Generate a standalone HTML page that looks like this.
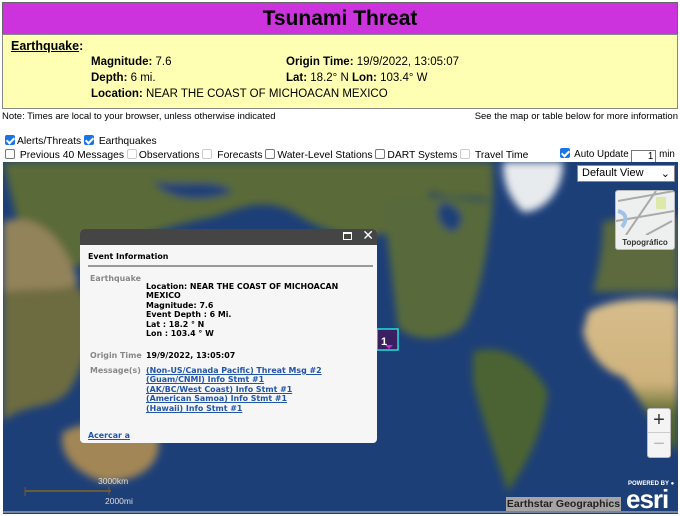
<!DOCTYPE html>
<html><head><meta charset="utf-8"><style>
*{margin:0;padding:0;box-sizing:border-box}
body{width:680px;height:516px;background:#fff;font-family:"Liberation Sans",sans-serif;position:relative;overflow:hidden;font-size:11px;color:#000}
.abs{position:absolute}
.title{left:2px;top:2px;width:676px;height:33px;background:#cc33dd;border:1px solid #666;text-align:center;font-weight:bold;font-size:21px;line-height:31px}
.eq{left:2px;top:34px;width:676px;height:75px;background:#ffffb4;border:1px solid #888}
.eq div{position:absolute;font-size:11.5px}
.cb{display:inline-block;width:10px;height:10px;border:1px solid #777;border-radius:2px;background:#fff;vertical-align:-1px;margin-right:2px}
.cb.on{background:#1a73e8;border-color:#1a73e8;position:relative}
.cb.on:after{content:"";position:absolute;left:2px;top:0px;width:3px;height:6px;border:solid #fff;border-width:0 2px 2px 0;transform:rotate(45deg)}
.cb.dis{border-color:#ccc}
.pop{left:80px;top:229px;width:297px;height:214px;background:#f6f6f6;border-radius:4px;overflow:hidden;font-family:"DejaVu Sans",sans-serif;font-size:7.9px;font-weight:bold}
.pop .hd{height:16px;background:#454545}
.lbl{color:#888}
a{color:#2255aa;text-decoration:underline}
</style></head><body>
<div class="abs title">Tsunami Threat</div>
<div class="abs eq">
<div style="left:8px;top:4px;font-weight:bold;font-size:12.5px"><u>Earthquake</u>:</div>
<div style="left:88px;top:21px"><b>Magnitude:</b> 7.6</div>
<div style="left:283px;top:21px"><b>Origin Time:</b> 19/9/2022, 13:05:07</div>
<div style="left:88px;top:37px"><b>Depth:</b> 6 mi.</div>
<div style="left:283px;top:37px"><b>Lat:</b> 18.2° N <b>Lon:</b> 103.4° W</div>
<div style="left:88px;top:53px"><b>Location:</b> NEAR THE COAST OF MICHOACAN MEXICO</div>
</div>
<div class="abs" style="left:2px;top:111px;font-size:9.5px">Note: Times are local to your browser, unless otherwise indicated</div>
<div class="abs" style="right:2px;top:111px;font-size:9.5px">See the map or table below for more information</div>
<div class="abs" style="left:5px;top:135px;font-size:10.3px"><span class="cb on"></span>Alerts/Threats <span class="cb on"></span> Earthquakes</div>
<div class="abs" style="left:5px;top:149px;font-size:10.3px;white-space:nowrap"><span class="cb"></span> Previous 40 Messages <span class="cb dis"></span>Observations <span class="cb dis"></span> Forecasts <span class="cb"></span>Water-Level Stations <span class="cb"></span>DART Systems <span class="cb dis"></span> Travel Time</div>
<div class="abs" style="left:560px;top:148px;font-size:9.8px;white-space:nowrap"><span class="cb on"></span> Auto Update <span style="display:inline-block;width:25px;height:13px;border:1px solid #777;text-align:right;padding-right:2px;vertical-align:-2px">1</span> min</div>

<svg class="abs" style="left:3px;top:162px" width="675" height="352" viewBox="0 0 675 352">
<defs><filter id="b"><feGaussianBlur stdDeviation="4"/></filter>
<linearGradient id="af" x1="0" y1="0" x2="0" y2="1"><stop offset="0" stop-color="#d7bd8c"/><stop offset="0.55" stop-color="#cfb27c"/><stop offset="0.75" stop-color="#5b6b2e"/><stop offset="1" stop-color="#48602a"/></linearGradient></defs>
<rect width="675" height="352" fill="#1d3f78"/>
<g filter="url(#b)">
<path d="M0 0H490V40C470 30 450 40 430 30 410 40 400 60 390 70 350 80 320 70 290 50 260 35 240 45 210 55 180 60 150 70 120 80 90 100 60 110 30 120 0 125Z" fill="#5a6a38"/>
<path d="M0 110C30 100 60 110 80 130 95 160 85 200 65 230 45 250 20 240 0 260Z" fill="#6d6c40"/>
<path d="M0 60C30 50 60 70 75 120 70 130 30 125 0 130Z" fill="#93835a"/>
<path d="M380 40C400 30 440 35 490 40 485 80 480 130 460 165 440 180 410 180 395 165 380 140 375 100Z" fill="#586b3a"/>
<path d="M150 20C190 25 210 15 230 30 200 40 170 40 150 20Z" fill="#1d3f78"/>
<path d="M440 40C460 45 465 60 450 70 435 65 430 50 440 40Z" fill="#1d3f78"/>
<path d="M470 190C500 180 530 200 545 230 540 270 525 300 505 330 495 300 480 260 470 220Z" fill="#4c6430"/>
<path d="M500 0H560C560 30 540 50 520 50 505 35 500 20 500 0Z" fill="#e8ebee"/>
<path d="M600 60C620 55 660 50 675 55V130H590C595 110 600 90 600 60Z" fill="#5c6a3e"/>
<path d="M585 150C610 135 650 135 675 140V290C660 280 640 240 620 215 600 210 585 190 580 170Z" fill="url(#af)"/>
<path d="M60 270C90 255 130 260 155 275 160 300 140 320 100 320 70 310 55 290 60 270Z" fill="#a28654"/>
</g>
<path d="M0 350H675" stroke="#ccc"/>
<line x1="22" y1="329" x2="108" y2="329" stroke="#6b5a3a" stroke-width="2"/>
<line x1="22" y1="325" x2="22" y2="334" stroke="#6b5a3a"/><line x1="106" y1="325" x2="106" y2="333" stroke="#6b5a3a"/>
<text x="95" y="322" font-family="Liberation Sans" font-size="8.5" fill="#ddd">3000km</text>
<text x="102" y="342" font-family="Liberation Sans" font-size="8.5" fill="#ddd">2000mi</text>
<rect x="374" y="167" width="21" height="21" fill="#3a2060" stroke="#22dddd" stroke-width="1.5"/>
<text x="378" y="183" font-family="Liberation Sans" font-weight="bold" font-size="11" fill="#fff">1</text>
<path d="M382 183l4 4 4-4z" fill="#bb33cc"/>
</svg>

<div class="abs" style="left:577px;top:165px;width:98px;height:17px;background:#fff;border:1px solid #888;font-size:11px;padding:1px 4px">Default View<span style="float:right">⌄</span></div>
<div class="abs" style="left:615px;top:190px;width:60px;height:60px;background:#eef0f0;border:1px solid #bbb;border-radius:3px">
<svg width="58" height="44"><path d="M2 10L58 0M10 44L40 0M0 30L58 20M30 44L56 30" stroke="#aaa" stroke-width="2" fill="none"/><rect x="40" y="6" width="10" height="12" fill="#dde9a8"/><path d="M2 20C10 22 12 28 6 36" stroke="#9ec3e6" stroke-width="4" fill="none"/></svg>
<div style="font-size:8px;font-weight:bold;text-align:center;color:#333">Topográfico</div></div>
<div class="abs" style="left:647px;top:408px;width:24px;height:50px;background:#f4f4f4;border:1px solid #bbb;border-radius:3px;text-align:center">
<div style="height:24px;font-size:20px;line-height:22px;color:#333;border-bottom:1px solid #ccc">+</div>
<div style="font-size:20px;line-height:22px;color:#bbb">−</div></div>
<div class="abs" style="left:506px;top:497px;width:115px;height:14px;background:#a5a5a5;color:#222;font-weight:bold;font-size:10.5px;text-align:center;line-height:14px">Earthstar Geographics</div>
<div class="abs" style="left:628px;top:481px;color:#fff;font-size:6px;font-weight:bold">POWERED BY ●</div>
<div class="abs" style="left:626px;top:484px;color:#fff;font-size:26px;font-weight:bold;letter-spacing:-1px">esri</div>

<div class="abs pop">
<div class="hd"><span style="position:absolute;right:25px;top:3px;width:9px;height:8px;border:1.5px solid #fff;border-top-width:2.5px"></span><span style="position:absolute;right:3px;top:-1px;color:#fff;font-size:14px;font-weight:normal">✕</span></div>
<div style="position:absolute;left:8px;top:23px">Event Information</div>
<div style="position:absolute;left:8px;top:36px;width:285px;height:2px;background:#999"></div>
<div class="lbl" style="position:absolute;left:10px;top:45px">Earthquake</div>
<div style="position:absolute;left:66px;top:53px;line-height:9.4px">Location: NEAR THE COAST OF MICHOACAN<br>MEXICO<br>Magnitude: 7.6<br>Event Depth : 6 Mi.<br>Lat : 18.2 ° N<br>Lon : 103.4 ° W</div>
<div class="lbl" style="position:absolute;left:10px;top:122px">Origin Time</div>
<div style="position:absolute;left:66px;top:122px">19/9/2022, 13:05:07</div>
<div class="lbl" style="position:absolute;left:10px;top:137px">Message(s)</div>
<div style="position:absolute;left:66px;top:137px;line-height:9.4px"><a>(Non-US/Canada Pacific) Threat Msg #2</a><br><a>(Guam/CNMI) Info Stmt #1</a><br><a>(AK/BC/West Coast) Info Stmt #1</a><br><a>(American Samoa) Info Stmt #1</a><br><a>(Hawaii) Info Stmt #1</a></div>
<div style="position:absolute;left:8px;top:202px"><a>Acercar a</a></div>
</div>
</body></html>
